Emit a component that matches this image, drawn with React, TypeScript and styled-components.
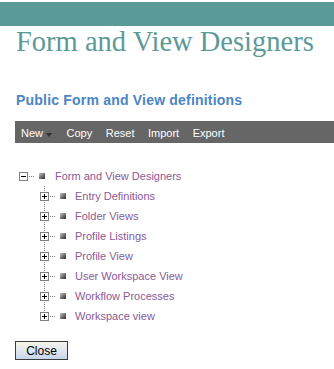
import styled, { createGlobalStyle } from "styled-components";

const GlobalStyle = createGlobalStyle`
  body {
    margin: 0;
    background: #ffffff;
    font-family: "Liberation Sans", Arial, sans-serif;
  }
`;

const Page = styled.div`
  width: 334px;
  padding-top: 2px;
`;

const TopBar = styled.div`
  height: 24px;
  background: #5c9a97;
`;

const Title = styled.h1`
  margin: 0;
  padding-left: 16px;
  font-family: "Liberation Serif", "Times New Roman", serif;
  font-weight: normal;
  font-size: 28.5px;
  line-height: 31px;
  color: #5c9a97;
  white-space: nowrap;
`;

const SubTitle = styled.h2`
  margin: 35px 0 0;
  padding-left: 16px;
  font-size: 14px;
  line-height: 16px;
  font-weight: bold;
  letter-spacing: 0.2px;
  color: #4a85c5;
`;

const Toolbar = styled.div`
  margin: 13px 0 0 15px;
  height: 22px;
  background: #666666;
  display: flex;
  align-items: center;
  padding: 2px 0 0 6px;
  box-sizing: border-box;
  gap: 13.5px;
`;

const ToolItem = styled.span`
  display: flex;
  align-items: center;
  font-size: 11px;
  color: #ffffff;
  white-space: nowrap;
`;

const DropArrow = styled.span`
  width: 0;
  height: 0;
  margin: 3px 1px 0 3px;
  border-left: 3.5px solid transparent;
  border-right: 3.5px solid transparent;
  border-top: 4px solid #333333;
`;

const Tree = styled.div`
  margin-top: 23px;
  padding-left: 19px;
`;

const Row = styled.div`
  display: flex;
  align-items: center;
  height: 20px;
`;

const Dots = styled.span`
  width: 7px;
  height: 1px;
  margin-top: 1px;
  background: repeating-linear-gradient(to right, transparent 0 1px, #808080 1px 2px);
  flex: none;
`;

const Bullet = styled.span`
  width: 6px;
  height: 6px;
  margin-left: 4px;
  margin-top: -1px;
  background: linear-gradient(135deg, #c4c4c4 0%, #6e6e6e 55%, #2e2e2e 100%);
  flex: none;
`;

const Label = styled.span<{ $gap: number }>`
  margin-left: ${(p) => p.$gap}px;
  font-size: 11px;
  color: #8a5a98;
  white-space: nowrap;
`;

const Children = styled.div`
  margin-left: 21px;
  position: relative;

  &::before {
    content: "";
    position: absolute;
    left: 4px;
    top: 0;
    bottom: 14px;
    width: 1px;
    background: repeating-linear-gradient(to bottom, #808080 0 1px, transparent 1px 2px);
  }
`;

const CloseButton = styled.button`
  margin: 15px 0 0 15px;
  width: 53px;
  height: 19px;
  padding: 0;
  border: 1px solid #3c3c3c;
  border-radius: 0;
  background: linear-gradient(to bottom, #f6f4ea 0%, #e4e8ee 45%, #c5d5ea 100%);
  font-family: "Liberation Sans", Arial, sans-serif;
  font-size: 12px;
  color: #000000;
`;

function Toggle({ open }: { open: boolean }) {
  return (
    <svg width="9" height="9" viewBox="0 0 9 9" shapeRendering="crispEdges" style={{ flex: "none", position: "relative", zIndex: 1 }}>
      <rect x="0.5" y="0.5" width="8" height="8" fill="#ffffff" stroke="#808080" />
      <line x1="2" y1="4.5" x2="7" y2="4.5" stroke="#000000" />
      {!open && <line x1="4.5" y1="2" x2="4.5" y2="7" stroke="#000000" />}
    </svg>
  );
}

const items = [
  "Entry Definitions",
  "Folder Views",
  "Profile Listings",
  "Profile View",
  "User Workspace View",
  "Workflow Processes",
  "Workspace view",
];

export default function App() {
  return (
    <>
      <GlobalStyle />
      <Page>
        <TopBar />
        <Title>Form and View Designers</Title>
        <SubTitle>Public Form and View definitions</SubTitle>
        <Toolbar>
          <ToolItem>
            New
            <DropArrow />
          </ToolItem>
          <ToolItem>Copy</ToolItem>
          <ToolItem>Reset</ToolItem>
          <ToolItem>Import</ToolItem>
          <ToolItem>Export</ToolItem>
        </Toolbar>
        <Tree>
          <Row>
            <Toggle open />
            <Dots />
            <Bullet />
            <Label $gap={10}>Form and View Designers</Label>
          </Row>
          <Children>
            {items.map((name) => (
              <Row key={name}>
                <Toggle open={false} />
                <Dots />
                <Bullet />
                <Label $gap={9}>{name}</Label>
              </Row>
            ))}
          </Children>
        </Tree>
        <CloseButton>Close</CloseButton>
      </Page>
    </>
  );
}
